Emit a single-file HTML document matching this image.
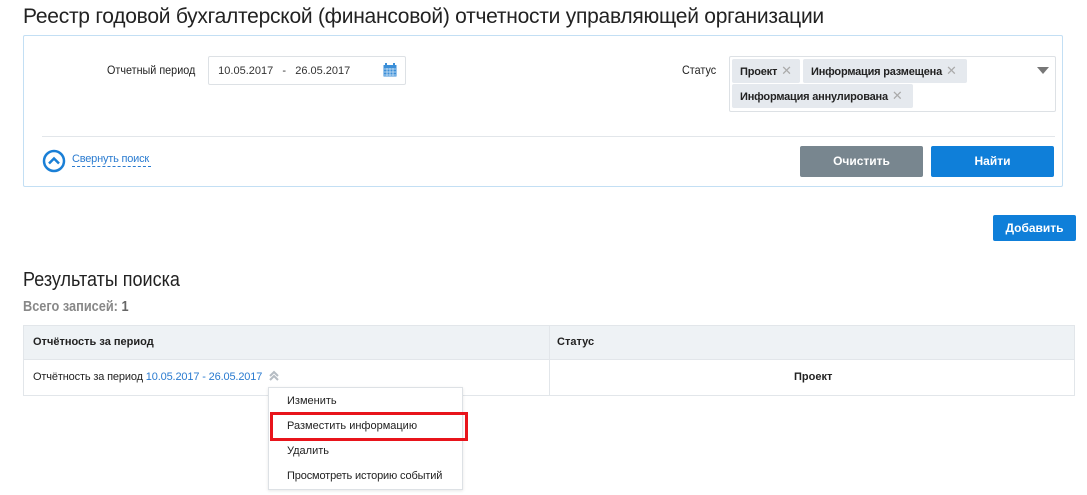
<!DOCTYPE html>
<html><head><meta charset="utf-8"><style>
body{margin:0;width:1087px;height:495px;background:#fff;font-family:"Liberation Sans",sans-serif;color:#222;position:relative;overflow:hidden}
.a{position:absolute}
.n{transform:scaleX(0.9);transform-origin:left top;white-space:nowrap}
.tag{position:absolute;height:24px;background:#e5e9ee;border-radius:2px;font-size:11px;font-weight:bold;line-height:24px;padding-left:8px;color:#222;box-sizing:border-box;letter-spacing:-0.2px}
.tag i{font-style:normal;color:#aaa;font-weight:normal;font-size:13px;margin-left:4px}
.btn{position:absolute;color:#fff;font-weight:bold;font-size:12px;text-align:center;border-radius:2px}
</style></head><body>
<div class="a" style="left:23px;top:5px;font-size:21px;color:#222;letter-spacing:-0.25px;white-space:nowrap">Реестр годовой бухгалтерской (финансовой) отчетности управляющей организации</div>
<div class="a" style="left:23px;top:35px;width:1038px;height:150px;border:1px solid #c3dff4;border-radius:2px"></div>
<div class="a" style="left:42px;top:136px;width:1013px;height:1px;background:#e2e6ea"></div>
<div class="a n" style="left:107px;top:63px;font-size:12px">Отчетный период</div>
<div class="a" style="left:208px;top:56px;width:196px;height:27px;border:1px solid #dde1e5;border-radius:2px;font-size:11px;line-height:29px;color:#333">&nbsp;&nbsp;&nbsp;10.05.2017&nbsp;&nbsp;&nbsp;-&nbsp;&nbsp;&nbsp;26.05.2017</div>
<svg class="a" style="left:383px;top:63px" width="14" height="14"><rect x="0.5" y="2" width="13" height="11.5" fill="#3c8fd8"/><rect x="2" y="0" width="2" height="3" fill="#3c8fd8"/><rect x="10" y="0" width="2" height="3" fill="#3c8fd8"/><g stroke="#cfe4f7" stroke-width="0.8"><line x1="1" y1="6" x2="13" y2="6"/><line x1="1" y1="9" x2="13" y2="9"/><line x1="1" y1="12" x2="13" y2="12"/><line x1="4" y1="5" x2="4" y2="13"/><line x1="7" y1="5" x2="7" y2="13"/><line x1="10" y1="5" x2="10" y2="13"/></g></svg>
<div class="a n" style="left:682px;top:63px;font-size:12px">Статус</div>
<div class="a" style="left:729px;top:56px;width:325px;height:54px;border:1px solid #dde1e5;border-radius:2px"></div>
<div class="tag" style="left:732px;top:59px;width:68px">Проект<i>✕</i></div>
<div class="tag" style="left:803px;top:59px;width:164px">Информация размещена<i>✕</i></div>
<div class="tag" style="left:732px;top:84px;width:181px">Информация аннулирована<i>✕</i></div>
<svg class="a" style="left:1037px;top:67px" width="12" height="8"><path d="M0 0H12L6 7Z" fill="#777"/></svg>
<svg class="a" style="left:42px;top:149px" width="24" height="24"><circle cx="12" cy="12" r="10" fill="none" stroke="#1a7fd6" stroke-width="2.5"/><path d="M7 14.5L12 9.5L17 14.5" fill="none" stroke="#1a7fd6" stroke-width="2.5"/></svg>
<div class="a" style="left:72px;top:152px;font-size:11px;color:#2a7bd0;border-bottom:1px dashed #2a7bd0;line-height:14px;width:79px;white-space:nowrap;letter-spacing:-0.2px">Свернуть поиск</div>
<div class="btn" style="left:800px;top:146px;width:123px;height:31px;line-height:31px;background:#78868f">Очистить</div>
<div class="btn" style="left:931px;top:146px;width:123px;height:31px;line-height:31px;background:#0f7fd9">Найти</div>
<div class="btn" style="left:993px;top:215px;width:83px;height:26px;line-height:26px;background:#0f7fd9">Добавить</div>
<div class="a n" style="left:23px;top:269px;font-size:20px">Результаты поиска</div>
<div class="a n" style="left:23px;top:298px;font-size:15px;color:#888;font-weight:bold;transform:scaleX(0.85)">Всего записей: <span style="color:#666">1</span></div>
<div class="a" style="left:23px;top:325px;width:1052px;height:71px;border:1px solid #e2e6ea;box-sizing:border-box"></div>
<div class="a" style="left:24px;top:326px;width:1050px;height:33px;background:#eef2f5;border-bottom:1px solid #e2e6ea"></div>
<div class="a" style="left:549px;top:326px;width:1px;height:70px;background:#e2e6ea"></div>
<div class="a" style="left:33px;top:336px;font-size:11px;font-weight:bold">Отчётность за период</div>
<div class="a" style="left:557px;top:336px;font-size:11px;font-weight:bold">Статус</div>
<div class="a" style="left:33px;top:371px;font-size:11px;letter-spacing:-0.15px;white-space:nowrap">Отчётность за период <span style="color:#2a7bd0">10.05.2017 - 26.05.2017</span></div>
<svg class="a" style="left:268px;top:370px" width="12" height="12"><path d="M2 6L6 2L10 6M2 10L6 6L10 10" fill="none" stroke="#b5bcc3" stroke-width="2"/></svg>
<div class="a" style="left:794px;top:371px;font-size:11px;font-weight:bold">Проект</div>
<div class="a" style="left:268px;top:387px;width:193px;height:101px;border:1px solid #dde1e5;background:#fff;box-shadow:0 1px 3px rgba(0,0,0,.1)"></div>
<div class="a" style="left:270px;top:412px;width:192px;height:23px;border:3px solid #e8141b"></div>
<div class="a" style="left:287px;top:395px;font-size:11px;line-height:12px">Изменить</div>
<div class="a" style="left:287px;top:420px;font-size:11px;line-height:12px">Разместить информацию</div>
<div class="a" style="left:287px;top:445px;font-size:11px;line-height:12px">Удалить</div>
<div class="a" style="left:287px;top:470px;font-size:11px;line-height:12px;letter-spacing:-0.15px;white-space:nowrap">Просмотреть историю событий</div>
</body></html>
